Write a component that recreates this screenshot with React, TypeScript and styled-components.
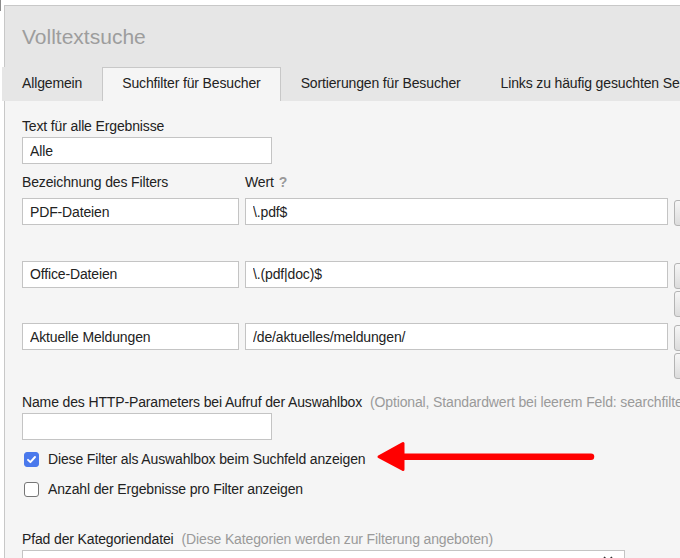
import styled, { createGlobalStyle } from 'styled-components';

const GlobalStyle = createGlobalStyle`
  body {
    margin: 0;
    background: #fff;
    font-family: 'Liberation Sans', Arial, sans-serif;
    font-size: 14px;
    letter-spacing: -0.14px;
    color: #222;
  }
`;

const Page = styled.div`
  position: relative;
  width: 680px;
  height: 558px;
  overflow: hidden;
  box-sizing: border-box;
  padding: 5px 0 0 4px;
  background: #fff;

  &::before {
    content: '';
    position: absolute;
    left: 0;
    top: 0;
    width: 1px;
    height: 11px;
    background: #8a8a8a;
  }
`;

const Panel = styled.div`
  width: 900px;
  min-height: 600px;
  border-left: 1px solid #c8c8c8;
  border-top: 1px solid #c8c8c8;
  background: #f5f5f5;
`;

const Header = styled.div`
  background: #e6e6e6;
  padding-top: 18px;
`;

const Title = styled.h1`
  margin: 0 0 18px 17px;
  font-size: 21px;
  line-height: 25px;
  font-weight: 400;
  letter-spacing: 0;
  color: #9d9d9d;
`;

const TabList = styled.div`
  display: flex;
  margin-left: -3px;
  border-bottom: 1px solid #c8c8c8;
  white-space: nowrap;
`;

const Tab = styled.div<{ $active?: boolean }>`
  padding: 0 19px 2px;
  line-height: 31px;
  margin-bottom: -1px;
  border: 1px solid ${({ $active }) => ($active ? '#c8c8c8' : 'transparent')};
  border-bottom: 0;
  background: ${({ $active }) => ($active ? '#f5f5f5' : '#e6e6e6')};
  color: #222;
`;

const Content = styled.div`
  padding: 17px 0 0 17px;
`;

const Label = styled.label`
  display: block;
  line-height: 16px;
  color: #222;
`;

const Hint = styled.span`
  margin-left: 8px;
  color: #9a9a9a;
  white-space: nowrap;
`;

const Help = styled.span`
  margin-left: 5px;
  font-weight: 700;
  color: #999;
`;

const TextInput = styled.input<{ $width: number }>`
  display: block;
  box-sizing: border-box;
  width: ${({ $width }) => $width}px;
  height: 27px;
  margin: 3px 0 0;
  padding: 0 7px;
  border: 1px solid #c4c4c4;
  border-radius: 0;
  background: #fff;
  font: inherit;
  letter-spacing: inherit;
  color: #222;
  outline: none;
`;

const FilterHead = styled.div`
  display: grid;
  grid-template-columns: 217px 423px;
  column-gap: 6px;
  margin-top: 10px;
  line-height: 16px;
`;

const FilterList = styled.div`
  display: flex;
  flex-direction: column;
  gap: 6.5px;
  margin-top: 8px;
`;

const FilterRow = styled.div`
  display: grid;
  grid-template-columns: 217px 423px 40px;
  column-gap: 6px;
  align-items: start;
  min-height: 56px;

  ${TextInput} {
    width: 100%;
    margin: 0;
  }
`;

const ButtonStack = styled.div`
  display: flex;
  flex-direction: column;
  gap: 2px;
  padding-top: 2px;
`;

const MoveButton = styled.button`
  width: 30px;
  height: 26px;
  padding: 0;
  border: 1px solid #b4b4b4;
  border-radius: 3px;
  background: linear-gradient(#f6f6f6, #dcdcdc);
`;

const Field = styled.div<{ $top: number }>`
  margin-top: ${({ $top }) => $top}px;
`;

const CheckRow = styled.label<{ $top: number }>`
  position: relative;
  display: flex;
  align-items: center;
  gap: 9px;
  height: 20px;
  line-height: 20px;
  margin-top: ${({ $top }) => $top}px;
  padding-left: 2px;
  white-space: nowrap;
`;

const Box = styled.span<{ $checked?: boolean }>`
  display: flex;
  align-items: center;
  justify-content: center;
  box-sizing: border-box;
  width: 15px;
  height: 15px;
  border-radius: 3px;
  border: 1px solid ${({ $checked }) => ($checked ? '#4a79ec' : '#767676')};
  background: ${({ $checked }) => ($checked ? '#4a79ec' : '#fff')};
`;

const Arrow = styled.svg`
  position: absolute;
  left: 348px;
  top: -10px;
`;

const Select = styled.div`
  position: relative;
  box-sizing: border-box;
  width: 603px;
  height: 27px;
  margin-top: 3px;
  border: 1px solid #c4c4c4;
  background: #fff;
`;

const Chevron = styled.svg`
  position: absolute;
  left: 579px;
  top: 4px;
`;

type Filter = { name: string; value: string; buttons: number };

const filters: Filter[] = [
  { name: 'PDF-Dateien', value: '\\.pdf$', buttons: 1 },
  { name: 'Office-Dateien', value: '\\.(pdf|doc)$', buttons: 2 },
  { name: 'Aktuelle Meldungen', value: '/de/aktuelles/meldungen/', buttons: 2 },
];

function Checkbox({ checked }: { checked?: boolean }) {
  return (
    <Box $checked={checked}>
      {checked && (
        <svg width="11" height="11" viewBox="0 0 11 11">
          <path d="M2 5.8 L4.4 8.2 L9 3" fill="none" stroke="#fff" strokeWidth="1.9" strokeLinecap="round" strokeLinejoin="round" />
        </svg>
      )}
    </Box>
  );
}

export default function App() {
  return (
    <Page>
      <GlobalStyle />
      <Panel>
        <Header>
          <Title>Volltextsuche</Title>
          <TabList>
            <Tab>Allgemein</Tab>
            <Tab $active>Suchfilter für Besucher</Tab>
            <Tab>Sortierungen für Besucher</Tab>
            <Tab>Links zu häufig gesuchten Seiten</Tab>
          </TabList>
        </Header>

        <Content>
          <Label>Text für alle Ergebnisse</Label>
          <TextInput $width={250} defaultValue="Alle" />

          <FilterHead>
            <span>Bezeichnung des Filters</span>
            <span>
              Wert<Help>?</Help>
            </span>
          </FilterHead>

          <FilterList>
            {filters.map((f) => (
              <FilterRow key={f.name}>
                <TextInput $width={217} defaultValue={f.name} />
                <TextInput $width={423} defaultValue={f.value} />
                <ButtonStack>
                  {Array.from({ length: f.buttons }).map((_, i) => (
                    <MoveButton key={i} type="button" />
                  ))}
                </ButtonStack>
              </FilterRow>
            ))}
          </FilterList>

          <Field $top={15}>
            <Label>
              Name des HTTP-Parameters bei Aufruf der Auswahlbox
              <Hint>(Optional, Standardwert bei leerem Feld: searchfilter)</Hint>
            </Label>
            <TextInput $width={250} defaultValue="" />
          </Field>

          <CheckRow $top={9}>
            <Checkbox checked />
            Diese Filter als Auswahlbox beim Suchfeld anzeigen
            <Arrow width="230" height="36" viewBox="0 0 230 36">
              <polygon points="9,17.7 33,4.5 33,30.5" fill="#f00" stroke="#f00" strokeWidth="3" strokeLinejoin="round" />
              <line x1="30" y1="17.7" x2="221" y2="17.7" stroke="#f00" strokeWidth="6.5" strokeLinecap="round" />
            </Arrow>
          </CheckRow>
          <CheckRow $top={10}>
            <Checkbox />
            Anzahl der Ergebnisse pro Filter anzeigen
          </CheckRow>

          <Field $top={32}>
            <Label>
              Pfad der Kategoriendatei
              <Hint>(Diese Kategorien werden zur Filterung angeboten)</Hint>
            </Label>
            <Select>
              <Chevron width="12" height="8" viewBox="0 0 12 8">
                <path d="M2 2 L6 6 L10 2" fill="none" stroke="#333" strokeWidth="1.5" />
              </Chevron>
            </Select>
          </Field>
        </Content>
      </Panel>
    </Page>
  );
}
